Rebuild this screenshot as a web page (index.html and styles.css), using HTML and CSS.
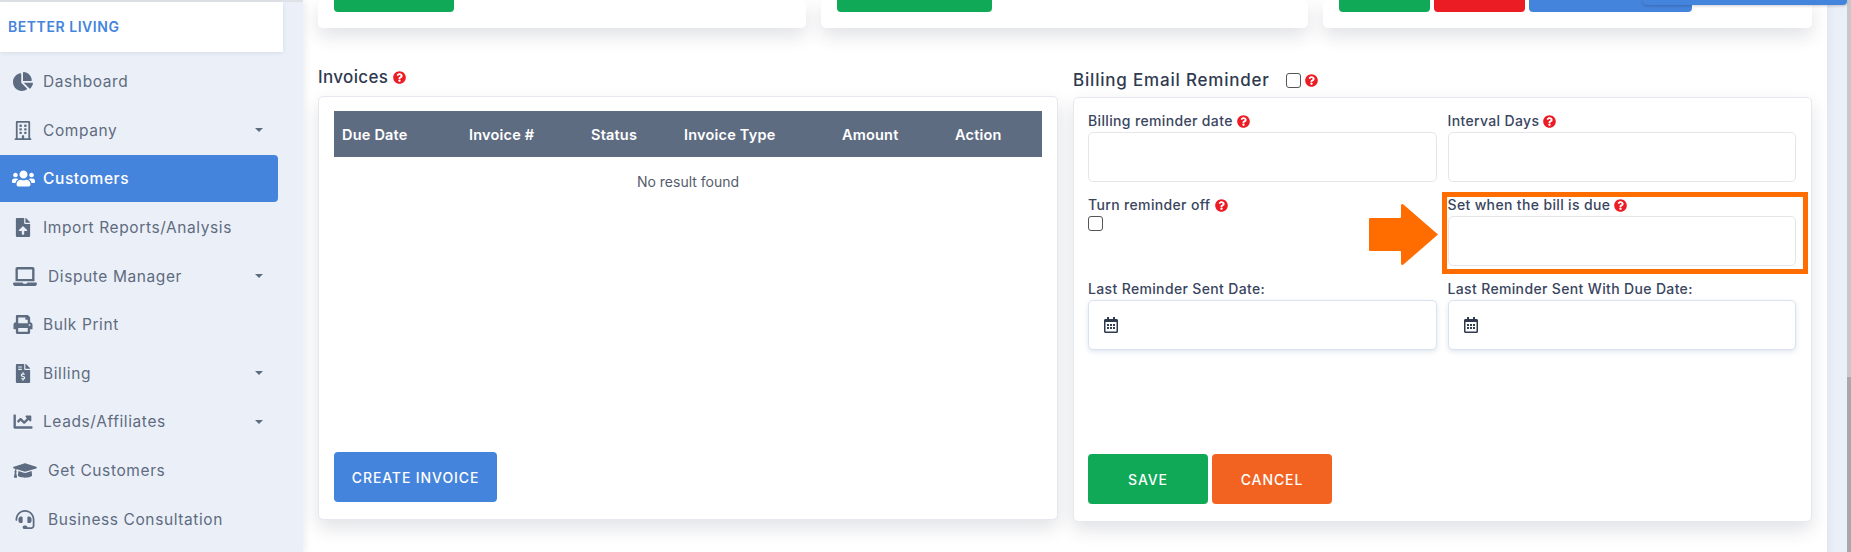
FILE: index.html
```html
<!DOCTYPE html>
<html lang="en">
<head>
    <meta charset="UTF-8">
    <meta name="viewport" content="width=device-width, initial-scale=1.0">
    <title>Better Living</title>
    <link rel="stylesheet" href="styles.css">
</head>
<body>
    <!-- icon sprite -->
    <svg class="sprite" xmlns="http://www.w3.org/2000/svg">
        <symbol id="i-pie" viewBox="0 0 544 512"><path d="M527.79 288H290.5l158.03 158.03c6.04 6.04 15.98 6.53 22.19.68 38.7-36.46 65.32-85.61 73.13-140.86 1.34-9.46-6.51-17.85-16.06-17.85zm-15.83-64.8C503.72 103.74 408.26 8.28 288.8.04 279.68-.59 272 7.1 272 16.24V240h223.77c9.14 0 16.82-7.68 16.19-16.8zM224 288V50.71c0-9.55-8.39-17.4-17.84-16.06C86.99 51.49-4.1 155.6.14 280.37 4.5 408.51 114.83 513.59 243.03 511.98c50.4-.63 96.97-16.87 135.26-44.03 7.9-5.6 8.42-17.23 1.57-24.08L224 288z"/></symbol>
        <symbol id="i-building" viewBox="0 0 448 512"><path d="M128 148v-40c0-6.6 5.4-12 12-12h40c6.6 0 12 5.4 12 12v40c0 6.6-5.4 12-12 12h-40c-6.6 0-12-5.4-12-12zm140 12h40c6.6 0 12-5.4 12-12v-40c0-6.6-5.4-12-12-12h-40c-6.6 0-12 5.4-12 12v40c0 6.6 5.4 12 12 12zm-128 96h40c6.6 0 12-5.4 12-12v-40c0-6.6-5.4-12-12-12h-40c-6.6 0-12 5.4-12 12v40c0 6.6 5.4 12 12 12zm128 0h40c6.6 0 12-5.4 12-12v-40c0-6.6-5.4-12-12-12h-40c-6.6 0-12 5.4-12 12v40c0 6.6 5.4 12 12 12zm-76 84v-40c0-6.6-5.4-12-12-12h-40c-6.6 0-12 5.4-12 12v40c0 6.6 5.4 12 12 12h40c6.6 0 12-5.4 12-12zm76 12h40c6.6 0 12-5.4 12-12v-40c0-6.6-5.4-12-12-12h-40c-6.6 0-12 5.4-12 12v40c0 6.6 5.4 12 12 12zm180 124v36H0v-36c0-6.6 5.4-12 12-12h19.5V24c0-13.3 10.7-24 24-24h337c13.3 0 24 10.7 24 24v440H436c6.6 0 12 5.4 12 12zM79.5 463H192v-67c0-6.6 5.4-12 12-12h40c6.6 0 12 5.4 12 12v67h112.5V49L80 48l-.5 415z"/></symbol>
        <symbol id="i-users" viewBox="0 0 640 512"><path d="M96 224c35.3 0 64-28.7 64-64s-28.7-64-64-64-64 28.7-64 64 28.7 64 64 64zm448 0c35.3 0 64-28.7 64-64s-28.7-64-64-64-64 28.7-64 64 28.7 64 64 64zm32 32h-64c-17.6 0-33.5 7.1-45.1 18.6 40.3 22.1 68.9 62 75.1 109.4h66c17.7 0 32-14.3 32-32v-32c0-35.3-28.7-64-64-64zm-256 0c61.9 0 112-50.1 112-112S381.9 32 320 32 208 82.1 208 144s50.1 112 112 112zm76.8 32h-8.3c-20.8 10-43.9 16-68.5 16s-47.6-6-68.5-16h-8.3C179.6 288 128 339.6 128 403.2V432c0 26.5 21.5 48 48 48h288c26.5 0 48-21.5 48-48v-28.8c0-63.6-51.6-115.2-115.2-115.2zm-223.7-13.4C161.5 263.1 145.6 256 128 256H64c-35.3 0-64 28.7-64 64v32c0 17.7 14.3 32 32 32h65.9c6.3-47.4 34.9-87.3 75.2-109.4z"/></symbol>
        <symbol id="i-upload" viewBox="0 0 384 512"><path d="M224 136V0H24C10.7 0 0 10.7 0 24v464c0 13.3 10.7 24 24 24h336c13.3 0 24-10.7 24-24V160H248c-13.2 0-24-10.8-24-24zm65.18 216.01H224v80c0 8.84-7.16 16-16 16h-32c-8.84 0-16-7.16-16-16v-80H94.82c-14.28 0-21.41-17.29-11.27-27.36l96.42-95.7c6.65-6.61 17.39-6.61 24.04 0l96.42 95.7c10.15 10.07 3.03 27.36-11.25 27.36zM377 105L279.1 7c-4.5-4.5-10.6-7-17-7H256v128h128v-6.1c0-6.3-2.5-12.4-7-16.9z"/></symbol>
        <symbol id="i-laptop" viewBox="0 0 640 512"><path d="M624 416H381.54c-.74 19.81-14.71 32-32.74 32H288c-18.69 0-33.02-17.47-32.77-32H16c-8.8 0-16 7.2-16 16v16c0 35.2 28.8 64 64 64h512c35.2 0 64-28.8 64-64v-16c0-8.8-7.2-16-16-16zM576 48c0-26.4-21.6-48-48-48H112C85.6 0 64 21.6 64 48v336h512V48zm-64 272H128V64h384v256z"/></symbol>
        <symbol id="i-print" viewBox="0 0 512 512"><path d="M448 192V77.25c0-8.49-3.37-16.62-9.37-22.63L393.37 9.37c-6-6-14.14-9.37-22.63-9.37H96C78.33 0 64 14.33 64 32v160c-35.35 0-64 28.65-64 64v112c0 8.84 7.16 16 16 16h48v96c0 17.67 14.33 32 32 32h320c17.67 0 32-14.33 32-32v-96h48c8.84 0 16-7.16 16-16V256c0-35.35-28.65-64-64-64zm-64 256H128v-96h256v96zm0-224H128V64h192v48c0 8.84 7.16 16 16 16h48v96zm48 72c-13.25 0-24-10.75-24-24 0-13.26 10.75-24 24-24s24 10.74 24 24c0 13.25-10.75 24-24 24z"/></symbol>
        <symbol id="i-invoice" viewBox="0 0 384 512"><path d="M377 105L279.1 7c-4.5-4.5-10.6-7-17-7H256v128h128v-6.1c0-6.3-2.5-12.4-7-16.9zm-153 31V0H24C10.7 0 0 10.7 0 24v464c0 13.3 10.7 24 24 24h336c13.3 0 24-10.7 24-24V160H248c-13.2 0-24-10.8-24-24zM64 72c0-4.42 3.58-8 8-8h80c4.42 0 8 3.58 8 8v16c0 4.42-3.58 8-8 8H72c-4.42 0-8-3.58-8-8V72zm0 80v-16c0-4.42 3.58-8 8-8h80c4.42 0 8 3.58 8 8v16c0 4.42-3.58 8-8 8H72c-4.42 0-8-3.58-8-8zm144 263.88V440c0 4.42-3.58 8-8 8h-16c-4.42 0-8-3.58-8-8v-24.29c-11.29-.58-22.27-4.52-31.37-11.35-3.9-2.93-4.1-8.77-.57-12.14l11.75-11.21c2.77-2.64 6.89-2.76 10.13-.73 3.87 2.42 8.26 3.72 12.82 3.72h28.11c6.5 0 11.8-5.92 11.8-13.19 0-5.95-3.61-11.19-8.77-12.73l-45-13.5c-18.59-5.58-31.58-23.42-31.58-43.39 0-24.52 19.05-44.44 42.67-45.07V232c0-4.42 3.58-8 8-8h16c4.42 0 8 3.58 8 8v24.29c11.29.58 22.27 4.51 31.37 11.35 3.9 2.93 4.1 8.77.57 12.14l-11.75 11.21c-2.77 2.64-6.89 2.76-10.13.73-3.87-2.43-8.26-3.72-12.82-3.72h-28.11c-6.5 0-11.8 5.92-11.8 13.19 0 5.95 3.61 11.19 8.77 12.73l45 13.5c18.59 5.58 31.58 23.42 31.58 43.39 0 24.53-19.05 44.44-42.67 45.07z"/></symbol>
        <symbol id="i-line" viewBox="0 0 512 512"><path d="M496 384H64V80c0-8.84-7.16-16-16-16H16C7.16 64 0 71.16 0 80v336c0 17.67 14.33 32 32 32h464c8.84 0 16-7.16 16-16v-32c0-8.84-7.16-16-16-16zM464 96H345.94c-21.38 0-32.09 25.85-16.97 40.97l32.4 32.4L288 242.75l-73.37-73.37c-12.5-12.5-32.76-12.5-45.25 0l-68.69 68.69c-6.25 6.25-6.25 16.38 0 22.63l22.62 22.62c6.25 6.25 16.38 6.25 22.63 0L192 237.25l73.37 73.37c12.5 12.5 32.76 12.5 45.25 0l96-96 32.4 32.4c15.12 15.12 40.97 4.41 40.97-16.97V112c.01-8.84-7.15-16-15.99-16z"/></symbol>
        <symbol id="i-cap" viewBox="0 0 640 512"><path d="M622.34 153.2L343.4 67.5c-15.2-4.67-31.6-4.67-46.79 0L17.66 153.2c-23.54 7.23-23.54 38.36 0 45.59l48.63 14.94c-10.67 13.19-17.23 29.28-17.88 46.9C38.78 266.15 32 276.11 32 288c0 10.78 5.68 19.85 13.86 25.65L20.33 428.53C18.11 438.52 25.71 448 35.94 448h56.11c10.24 0 17.84-9.48 15.62-19.47L82.14 313.65C90.32 307.85 96 298.78 96 288c0-11.57-6.47-21.25-15.66-26.87.76-15.02 8.44-28.3 20.69-36.72L296.6 284.5c9.06 2.78 26.44 6.25 46.79 0l278.95-85.7c23.55-7.24 23.55-38.36 0-45.6zM352.79 315.09c-28.53 8.76-52.84 3.92-65.59 0l-145.02-44.55L128 384c0 35.35 85.96 64 192 64s192-28.65 192-64l-14.18-113.47-145.03 44.56z"/></symbol>
        <symbol id="i-headset" viewBox="0 0 512 512"><path d="M192 208c0-17.67-14.33-32-32-32h-16c-35.35 0-64 28.65-64 64v48c0 35.35 28.65 64 64 64h16c17.67 0 32-14.33 32-32V208zm176 144c35.35 0 64-28.65 64-64v-48c0-35.35-28.65-64-64-64h-16c-17.67 0-32 14.33-32 32v112c0 17.67 14.33 32 32 32h16zM256 0C113.18 0 4.58 118.83 0 256v16c0 8.84 7.16 16 16 16h16c8.84 0 16-7.16 16-16v-16c0-114.69 93.31-208 208-208s208 93.31 208 208h-.12c.08 2.43.12 165.72.12 165.72 0 23.35-18.93 42.28-42.28 42.28H320c0-26.51-21.49-48-48-48h-32c-26.51 0-48 21.49-48 48s21.49 48 48 48h181.72c49.86 0 90.28-40.42 90.28-90.28V256C507.42 118.83 398.82 0 256 0z"/></symbol>
        <symbol id="i-help" viewBox="0 0 512 512"><path d="M504 256c0 136.997-111.043 248-248 248S8 392.997 8 256C8 119.083 119.043 8 256 8s248 111.083 248 248zM262.655 90c-54.497 0-89.255 22.957-116.549 63.758-3.536 5.286-2.353 12.415 2.715 16.258l34.699 26.31c5.205 3.947 12.621 3.008 16.665-2.122 17.864-22.658 30.113-35.797 57.303-35.797 20.429 0 45.698 13.148 45.698 32.958 0 14.976-12.363 22.667-32.534 33.976C247.128 238.528 216 254.941 216 296v4c0 6.627 5.373 12 12 12h56c6.627 0 12-5.373 12-12v-1.333c0-28.462 83.186-29.647 83.186-106.667 0-58.002-60.165-102-116.531-102zM256 338c-25.365 0-46 20.635-46 46 0 25.364 20.635 46 46 46s46-20.636 46-46c0-25.365-20.635-46-46-46z"/></symbol>
        <symbol id="i-calendar" viewBox="0 0 448 512"><path d="M148 288h-40c-6.6 0-12-5.4-12-12v-40c0-6.6 5.4-12 12-12h40c6.6 0 12 5.4 12 12v40c0 6.6-5.4 12-12 12zm108-12v-40c0-6.6-5.4-12-12-12h-40c-6.6 0-12 5.4-12 12v40c0 6.6 5.4 12 12 12h40c6.6 0 12-5.4 12-12zm96 0v-40c0-6.6-5.4-12-12-12h-40c-6.6 0-12 5.4-12 12v40c0 6.6 5.4 12 12 12h40c6.6 0 12-5.4 12-12zm-96 96v-40c0-6.6-5.4-12-12-12h-40c-6.6 0-12 5.4-12 12v40c0 6.6 5.4 12 12 12h40c6.6 0 12-5.4 12-12zm-96 0v-40c0-6.6-5.4-12-12-12h-40c-6.6 0-12 5.4-12 12v40c0 6.6 5.4 12 12 12h40c6.6 0 12-5.4 12-12zm192 0v-40c0-6.6-5.4-12-12-12h-40c-6.6 0-12 5.4-12 12v40c0 6.6 5.4 12 12 12h40c6.6 0 12-5.4 12-12zm96-260v352c0 26.5-21.5 48-48 48H48c-26.5 0-48-21.5-48-48V112c0-26.5 21.5-48 48-48h48V12c0-6.6 5.4-12 12-12h40c6.6 0 12 5.4 12 12v52h128V12c0-6.6 5.4-12 12-12h40c6.6 0 12 5.4 12 12v52h48c26.5 0 48 21.5 48 48zm-48 346V160H48v298c0 3.3 2.7 6 6 6h340c3.3 0 6-2.7 6-6z"/></symbol>
    </svg>

    <div class="app">
        <aside class="sidebar">
            <div class="brand">BETTER LIVING</div>
            <nav class="nav">
                <a class="nav-item"><svg class="nav-icon"><use href="#i-pie"/></svg><span>Dashboard</span></a>
                <a class="nav-item"><svg class="nav-icon"><use href="#i-building"/></svg><span>Company</span><i class="caret"></i></a>
                <a class="nav-item active"><svg class="nav-icon"><use href="#i-users"/></svg><span>Customers</span></a>
                <a class="nav-item"><svg class="nav-icon"><use href="#i-upload"/></svg><span>Import Reports/Analysis</span></a>
                <a class="nav-item wide"><svg class="nav-icon"><use href="#i-laptop"/></svg><span>Dispute Manager</span><i class="caret"></i></a>
                <a class="nav-item"><svg class="nav-icon"><use href="#i-print"/></svg><span>Bulk Print</span></a>
                <a class="nav-item"><svg class="nav-icon"><use href="#i-invoice"/></svg><span>Billing</span><i class="caret"></i></a>
                <a class="nav-item"><svg class="nav-icon"><use href="#i-line"/></svg><span>Leads/Affiliates</span><i class="caret"></i></a>
                <a class="nav-item wide"><svg class="nav-icon"><use href="#i-cap"/></svg><span>Get Customers</span></a>
                <a class="nav-item wide"><svg class="nav-icon"><use href="#i-headset"/></svg><span>Business Consultation</span></a>
            </nav>
        </aside>

        <main class="main">
            <div class="top-row">
                <div class="card top-card">
                    <button class="btn green btn-a"></button>
                </div>
                <div class="card top-card">
                    <button class="btn green btn-b"></button>
                </div>
                <div class="card top-card">
                    <button class="btn green btn-c"></button>
                    <button class="btn red btn-c"></button>
                    <button class="btn blue btn-d"></button>
                </div>
            </div>

            <div class="panels">
                <section class="panel panel-invoices">
                    <h3 class="panel-title">Invoices <svg class="help"><use href="#i-help"/></svg></h3>
                    <div class="card invoices-card">
                        <table class="table">
                            <thead>
                                <tr>
                                    <th class="col-due">Due Date</th>
                                    <th class="col-num">Invoice #</th>
                                    <th class="col-status">Status</th>
                                    <th class="col-type">Invoice Type</th>
                                    <th class="col-amount">Amount</th>
                                    <th>Action</th>
                                </tr>
                            </thead>
                            <tbody>
                                <tr><td colspan="6">No result found</td></tr>
                            </tbody>
                        </table>
                        <div class="actions">
                            <button class="btn blue btn-create">CREATE INVOICE</button>
                        </div>
                    </div>
                </section>

                <section class="panel panel-billing">
                    <h3 class="panel-title billing-title">Billing Email Reminder<input type="checkbox" class="check title-check"><svg class="help"><use href="#i-help"/></svg></h3>
                    <div class="card billing-card">
                        <div class="form-grid">
                            <div class="field">
                                <label>Billing reminder date <svg class="help small"><use href="#i-help"/></svg></label>
                                <input type="text" class="input">
                            </div>
                            <div class="field">
                                <label>Interval Days <svg class="help small"><use href="#i-help"/></svg></label>
                                <input type="text" class="input">
                            </div>
                            <div class="field">
                                <label>Turn reminder off <svg class="help small"><use href="#i-help"/></svg></label>
                                <input type="checkbox" class="check">
                            </div>
                            <div class="field">
                                <label>Set when the bill is due <svg class="help small"><use href="#i-help"/></svg></label>
                                <input type="text" class="input">
                                <span class="highlight"></span>
                                <svg class="arrow" viewBox="0 0 69 61"><path d="M1 14H31Q32 14 32 13V1Q33 -1 35 1L69 30.500L35 60Q33 62 32 60V48Q32 47 31 47H1Q0 47 0 46V15Q0 14 1 14Z"/></svg>
                            </div>
                            <div class="field">
                                <label>Last Reminder Sent Date:</label>
                                <div class="input date-input"><svg class="calendar"><use href="#i-calendar"/></svg></div>
                            </div>
                            <div class="field">
                                <label>Last Reminder Sent With Due Date:</label>
                                <div class="input date-input"><svg class="calendar"><use href="#i-calendar"/></svg></div>
                            </div>
                        </div>
                        <div class="actions">
                            <button class="btn green btn-save">SAVE</button>
                            <button class="btn orange btn-save">CANCEL</button>
                        </div>
                    </div>
                </section>
            </div>
        </main>

        <div class="right-strip"><div class="scroll-track"><div class="scroll-thumb"></div></div></div>
    </div>

    <div class="toast"></div>
</body>
</html>
```

FILE: styles.css
```css
* {
    box-sizing: border-box;
}
html, body {
    margin: 0;
    height: 100%;
    overflow: hidden;
}
body {
    font-family: Inter, "Open Sans", sans-serif;
    color: #2f3a4f;
    background: #fff;
}
.sprite {
    display: none;
}
.app {
    display: flex;
    height: 552px;
}

/* sidebar */
.sidebar {
    width: 303px;
    flex: none;
    background: #ebf0f8;
    box-shadow: 3px 0 6px rgba(40, 50, 70, 0.08);
    position: relative;
    z-index: 1;
}
.sidebar::before {
    content: "";
    display: block;
    height: 2px;
    background: #dfe3e8;
}
.brand {
    width: 283px;
    height: 50px;
    background: #fff;
    padding-left: 8px;
    line-height: 50px;
    font-size: 14px;
    font-weight: 600;
    letter-spacing: 0.55px;
    color: #4584dc;
    box-shadow: 0 1px 4px rgba(40, 50, 70, 0.1);
}
.nav {
    display: flex;
    flex-direction: column;
    padding-top: 5.5px;
}
.nav-item {
    display: flex;
    align-items: center;
    width: 278px;
    height: 48.6px;
    padding: 0 14px 0 13px;
    font-size: 15.5px;
    letter-spacing: 0.6px;
    color: #5f6b7f;
    border-radius: 0 4px 4px 0;
}
.nav-icon {
    width: 20px;
    height: 19px;
    flex: none;
    margin-right: 10px;
    fill: #5e6c82;
}
.nav-item.wide .nav-icon {
    width: 24px;
    margin-right: 11px;
}
.nav-item.active {
    background: #4584dc;
    color: #fff;
    font-weight: 500;
    height: 47px;
    margin: 0.8px 0;
}
.nav-item.active .nav-icon {
    fill: #fff;
    width: 23px;
    margin-left: -1px;
    margin-right: 8px;
}
.caret {
    margin-left: auto;
    margin-right: 1px;
    border-left: 4.5px solid transparent;
    border-right: 4.5px solid transparent;
    border-top: 4.5px solid #5e6c82;
}

/* main column */
.main {
    flex: 1;
    min-width: 0;
    padding: 0 15px;
}
.card {
    background: #fff;
    border-radius: 5px;
    box-shadow: 0 8px 18px rgba(40, 50, 70, 0.14);
}
.top-row {
    display: grid;
    grid-template-columns: 488px 487px 489px;
    gap: 15px;
    height: 28px;
    margin-bottom: 40px;
}
.top-card {
    padding: 0 16px;
    display: flex;
    gap: 4px;
    align-items: flex-start;
}
.btn {
    border: 0;
    border-radius: 4px;
    color: #fff;
    font-family: inherit;
    font-size: 14px;
    font-weight: 500;
    letter-spacing: 0.9px;
    padding: 0;
}
.top-card .btn {
    height: 12px;
    border-radius: 0 0 4px 4px;
}
.btn-a { width: 120px; }
.btn-b { width: 155px; }
.btn-c { width: 91px; }
.btn-d { width: 163px; }
.green { background: #10a958; }
.red { background: #ec1c24; }
.blue { background: #4584dc; }
.orange { background: #f26322; }

.panels {
    display: flex;
    gap: 15px;
}
.panel-invoices {
    width: 740px;
}
.panel-billing {
    width: 739px;
}
.panel-title {
    display: flex;
    align-items: center;
    gap: 5px;
    height: 18px;
    margin: 0;
    font-size: 17px;
    font-weight: 500;
    letter-spacing: 0.35px;
    color: #2f3a4f;
}
.billing-title {
    margin-top: 3px;
    gap: 0;
    letter-spacing: 0.8px;
}
.help {
    width: 13px;
    height: 13px;
    fill: #ed1c24;
    flex: none;
}
.help.small {
    vertical-align: -2px;
}
.invoices-card {
    margin-top: 10px;
    height: 424px;
    padding: 14px 15px 17px;
    display: flex;
    flex-direction: column;
    border: 1px solid #e6e8f0;
}
.table {
    width: 100%;
    border-collapse: collapse;
    table-layout: fixed;
}
.table th {
    background: #5e6c82;
    color: #fff;
    font-size: 14.5px;
    font-weight: 600;
    letter-spacing: 0.2px;
    height: 46px;
    padding: 0 8px;
    text-align: left;
}
.col-due { width: 127px; }
.col-num { width: 122px; }
.col-status { width: 93px; }
.col-type { width: 158px; }
.col-amount { width: 113px; }
.table td {
    text-align: center;
    font-size: 14px;
    color: #555c6b;
    padding: 16px 0;
}
.actions {
    margin-top: auto;
    display: flex;
    gap: 4px;
}
.btn-create {
    width: 163px;
    height: 50px;
}
.billing-card {
    margin-top: 8px;
    height: 425px;
    padding: 15px 15px 17px 14px;
    display: flex;
    flex-direction: column;
    border: 1px solid #e6e8f0;
}
.form-grid {
    display: grid;
    grid-template-columns: 1fr 1fr;
    column-gap: 11px;
    grid-auto-rows: 84px;
}
.field {
    position: relative;
    display: flex;
    flex-direction: column;
    align-items: flex-start;
}
.field label {
    display: block;
    height: 19px;
    font-size: 14px;
    font-weight: 500;
    letter-spacing: 0.35px;
    color: #3a4560;
    line-height: 15px;
}
.input {
    width: 100%;
    height: 50px;
    border: 1px solid #e4e6ea;
    border-radius: 5px;
    background: #fff;
    flex: none;
}
.check {
    appearance: none;
    width: 15px;
    height: 15px;
    margin: 0;
    border: 1px solid #555;
    border-radius: 3px;
    background: #fff;
    flex: none;
}
.check.title-check {
    margin: 0 4px 0 16px;
}
.date-input {
    display: flex;
    align-items: center;
    padding-left: 15px;
    border-color: #d9e2f0;
    box-shadow: 0 2px 5px rgba(60, 90, 140, 0.15);
}
.calendar {
    width: 14px;
    height: 16px;
    fill: #2f3a4f;
}
/* annotation drawn on top of the form */
.highlight {
    position: absolute;
    left: -6px;
    right: -12px;
    top: -5px;
    height: 82px;
    border: 5px solid #ff6c00;
    pointer-events: none;
}
.arrow {
    position: absolute;
    left: -79px;
    top: 7px;
    width: 69px;
    height: 61px;
    fill: #ff6c00;
}
.btn-save {
    width: 120px;
    height: 50px;
}

.right-strip {
    width: 24px;
    flex: none;
    background: linear-gradient(to right, #e2e7f1, #ebf0f8 40%);
    display: flex;
    justify-content: flex-end;
}
.scroll-track {
    width: 4px;
    background: #c8c8c8;
    padding-top: 377px;
}
.scroll-thumb {
    height: 175px;
    background: #a8a8a8;
}
.toast {
    position: absolute;
    top: 0;
    left: 1643px;
    width: 204px;
    height: 5px;
    background: #4584dc;
    border-radius: 0 0 4px 4px;
    box-shadow: 0 1px 3px rgba(0, 0, 0, 0.2);
}
```
